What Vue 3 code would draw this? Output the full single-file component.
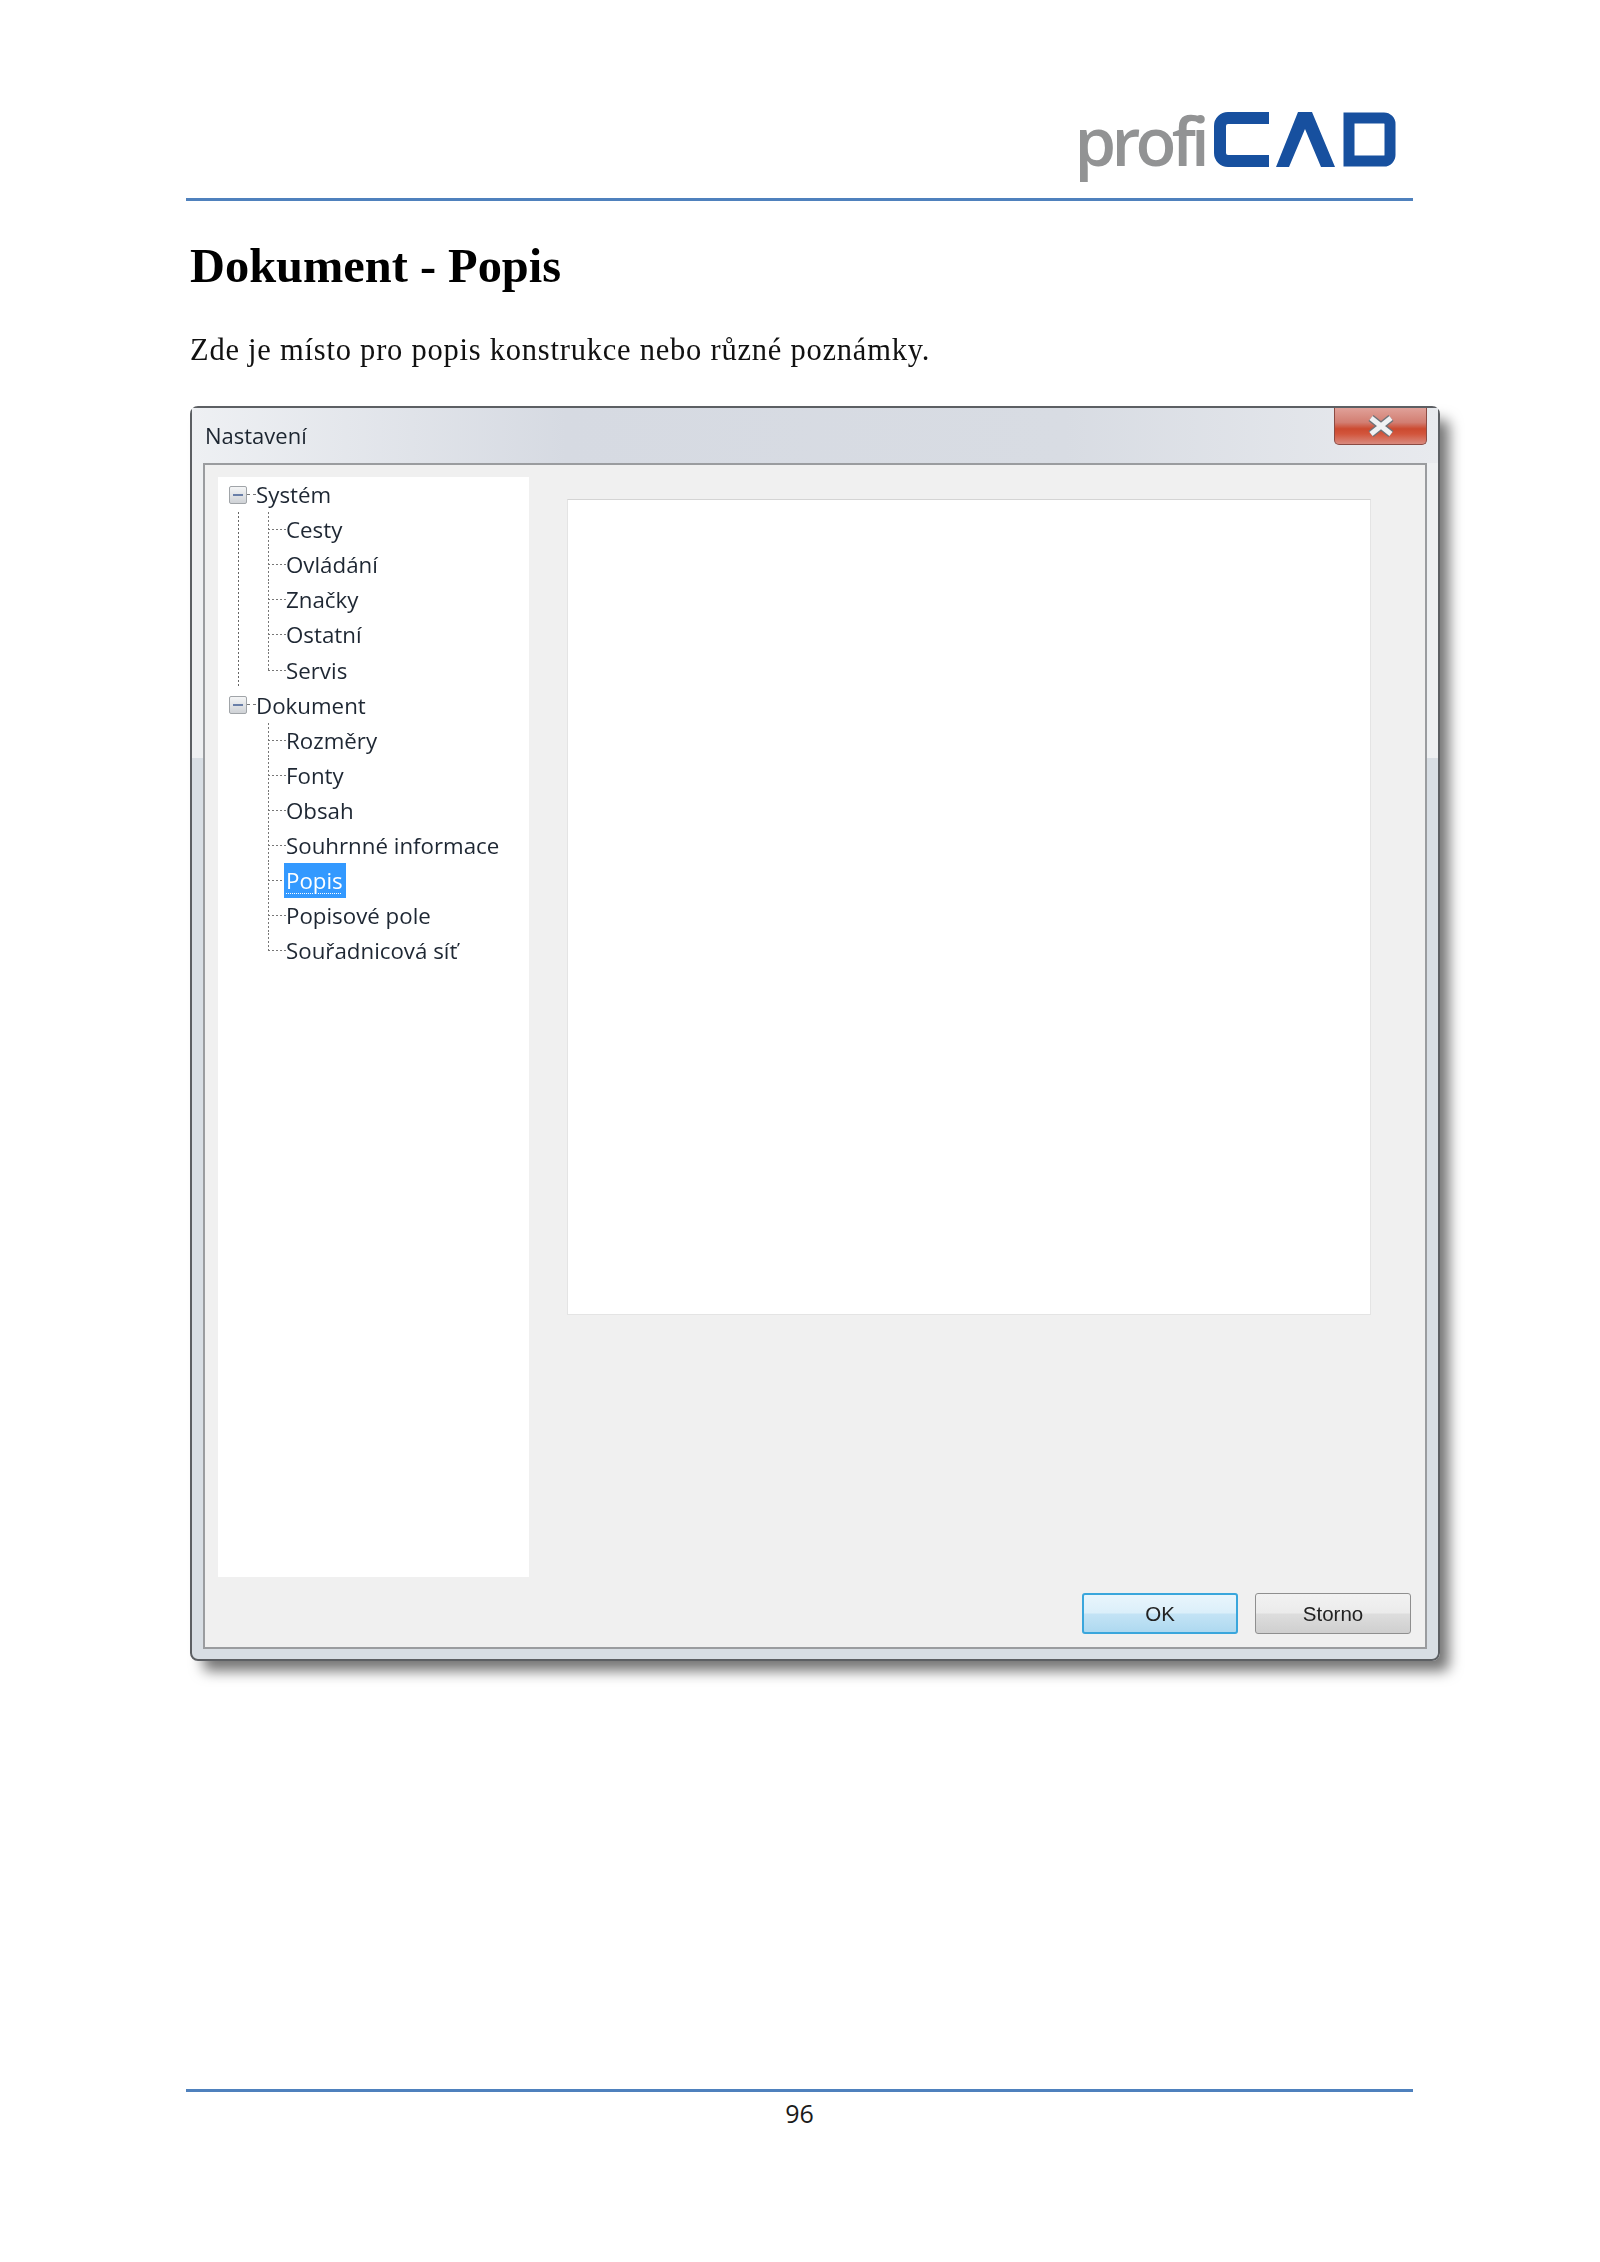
<script setup>
const groups = [
  { name: 'Systém', more: true, items: ['Cesty', 'Ovládání', 'Značky', 'Ostatní', 'Servis'] },
  { name: 'Dokument', more: false, items: ['Rozměry', 'Fonty', 'Obsah', 'Souhrnné informace', 'Popis', 'Popisové pole', 'Souřadnicová síť'] },
]
</script>

<template>
  <div class="page">
    <header class="head">
      <div class="logo" role="img" aria-label="profiCAD">
        <span class="profi">profi</span>
        <svg class="mark" width="183" height="57" viewBox="0 0 183 57">
          <path d="M55 7H14a8 8 0 0 0-8 8v27a8 8 0 0 0 8 8h41" fill="none" stroke="#17509f" stroke-width="12" />
          <path d="M62 56H75L91 18L107 56H121L98 1H84Z" fill="#17509f" />
          <path d="M135 7H170a6 6 0 0 1 6 6V44a6 6 0 0 1-6 6H135Z" fill="none" stroke="#17509f" stroke-width="11" />
        </svg>
      </div>
    </header>

    <h1 class="title">Dokument - Popis</h1>
    <p class="lead">Zde je místo pro popis konstrukce nebo různé poznámky.</p>

    <section class="window">
      <div class="titlebar">
        <span class="caption">Nastavení</span>
        <span class="close">
          <svg width="28" height="24" viewBox="0 0 28 24">
            <path d="M4 4L24 20M24 4L4 20" stroke="#6e7278" stroke-width="8" fill="none" />
            <path d="M4 4L24 20M24 4L4 20" stroke="#f0f1f3" stroke-width="5" fill="none" />
          </svg>
        </span>
      </div>
      <div class="panel">
        <nav class="tree">
          <div v-for="g in groups" :key="g.name">
            <div class="root">
              <span class="expander"><i></i></span>
              <span class="dash"></span>
              <span class="label">{{ g.name }}</span>
            </div>
            <div class="children" :class="{ more: g.more }">
              <div v-for="(item, i) in g.items" :key="item" class="child">
                <span class="stem" :class="{ last: i === g.items.length - 1 }"></span>
                <span class="label" :class="{ selected: item === 'Popis' }">{{ item }}</span>
              </div>
            </div>
          </div>
        </nav>
        <div class="content">
          <div class="memo"></div>
          <div class="actions">
            <button class="btn ok">OK</button>
            <button class="btn">Storno</button>
          </div>
        </div>
      </div>
    </section>

    <footer class="foot">96</footer>
  </div>
</template>

<style scoped>
.page {
  width: 1600px;
  height: 2262px;
  background: #fff;
  display: flex;
  flex-direction: column;
  overflow: hidden;
}
.head {
  margin: 0 187px 0 186px;
  height: 201px;
  border-bottom: 3px solid #4f81bd;
  box-sizing: border-box;
  display: flex;
  justify-content: flex-end;
  padding: 106px 16px 0 0;
}
.logo {
  display: flex;
  align-items: flex-start;
  filter: blur(0.7px);
}
.profi {
  font-family: "Open Sans", sans-serif;
  font-weight: 600;
  font-size: 67px;
  line-height: 68px;
  letter-spacing: -4.8px;
  color: #929394;
  margin-right: 9px;
}
.mark { margin-top: 5px; }
.title {
  font-family: "Liberation Serif", serif;
  font-weight: 700;
  font-size: 48.4px;
  line-height: 56px;
  color: #000;
  margin: 37px 0 0 190px;
  filter: blur(0.3px);
}
.lead {
  font-family: "Liberation Serif", serif;
  font-size: 30.5px;
  line-height: 40px;
  letter-spacing: 0.77px;
  color: #111;
  margin: 36px 0 0 190px;
  filter: blur(0.3px);
}
.window {
  width: 1250px;
  height: 1255px;
  margin: 36px 0 0 190px;
  box-sizing: border-box;
  border: 2px solid #5c5f63;
  border-radius: 8px;
  background: linear-gradient(180deg, #eef0f2 0 28%, #d8dee4 28% 100%);
  box-shadow: 11px 12px 14px -2px rgba(0, 0, 0, 0.55);
  display: flex;
  flex-direction: column;
}
.titlebar {
  height: 55px;
  display: flex;
  justify-content: space-between;
  align-items: flex-start;
  padding: 0 11px 0 13px;
  background: linear-gradient(90deg, #eef0f3, #d6dae2 30%, #d8dce3 70%, #e8eaee);
}
.caption {
  font-family: "Open Sans", sans-serif;
  font-size: 22px;
  line-height: 55px;
  color: #1c2530;
  filter: blur(0.5px);
}
.close {
  width: 93px;
  height: 37px;
  box-sizing: border-box;
  border: 1px solid #8b4b43;
  border-top: 0;
  border-radius: 0 0 5px 5px;
  background: linear-gradient(180deg, #e0a199 0, #d27e72 40%, #cc4a30 58%, #d2553c 72%, #d98a7e 100%);
  display: flex;
  align-items: center;
  justify-content: center;
}
.panel {
  flex: 1;
  margin: 0 11px 10px;
  box-sizing: border-box;
  border: 2px solid #9a9c9f;
  background: #f0f0f0;
  display: flex;
  padding: 12px 14px 13px 13px;
}
.tree {
  width: 311px;
  height: 1100px;
  background: #fff;
  font-family: "Open Sans", sans-serif;
  font-size: 22.3px;
  color: #1e2733;
}
.root, .child {
  height: 35.1px;
  display: flex;
  align-items: center;
}
.label {
  line-height: 35px;
  filter: blur(0.45px);
  white-space: nowrap;
}
.root { padding-left: 11px; }
.expander {
  width: 18px;
  height: 18px;
  box-sizing: border-box;
  border: 1px solid #a0a4a8;
  border-radius: 2px;
  background: linear-gradient(180deg, #f4f5f6, #cfd2d6);
  display: flex;
  align-items: center;
  justify-content: center;
}
.expander i {
  width: 10px;
  height: 2px;
  background: #6a7fa8;
}
.dash {
  width: 9px;
  height: 1px;
  border-top: 1px dashed #777;
}
.children {
  margin-left: 20px;
  padding-left: 30px;
}
.children.more {
  background: repeating-linear-gradient(180deg, #666 0 2px, transparent 2px 4px) left top / 1px 100% no-repeat;
}
.stem {
  width: 18px;
  align-self: stretch;
  background:
    repeating-linear-gradient(180deg, #777 0 2px, transparent 2px 4px) left top / 1px 100% no-repeat,
    repeating-linear-gradient(90deg, #777 0 2px, transparent 2px 4px) left center / 100% 1px no-repeat;
}
.stem.last {
  background:
    repeating-linear-gradient(180deg, #777 0 2px, transparent 2px 4px) left top / 1px 50% no-repeat,
    repeating-linear-gradient(90deg, #777 0 2px, transparent 2px 4px) left center / 100% 1px no-repeat;
}
.selected {
  background: #3399ff;
  color: #fff;
  padding: 0 3px 0 2px;
  margin-left: -2px;
  text-decoration: underline dotted 1px;
  text-underline-offset: 4px;
}
.content {
  flex: 1;
  display: flex;
  flex-direction: column;
  padding: 22px 0 0 38px;
}
.memo {
  width: 804px;
  height: 816px;
  background: #fff;
  border: 1px solid #e4e4e4;
  border-top-color: #d4d4d4;
  box-sizing: border-box;
}
.actions {
  margin-top: auto;
  display: flex;
  justify-content: flex-end;
  gap: 17px;
}
.btn {
  width: 156px;
  height: 41px;
  box-sizing: border-box;
  border: 1px solid #8f8f8f;
  border-radius: 3px;
  background: linear-gradient(180deg, #f2f2f2 0, #ebebeb 48%, #dddddd 52%, #cfcfcf 100%);
  font-family: "Liberation Sans", sans-serif;
  font-size: 20.5px;
  color: #222;
  filter: blur(0.4px);
  padding: 0;
}
.ok {
  border: 2px solid #3aa6dc;
  background: linear-gradient(180deg, #e9f5fc 0, #dbeffa 48%, #c3e3f5 52%, #aed9f0 100%);
}
.foot {
  margin-top: auto;
  margin-left: 186px;
  width: 1227px;
  height: 173px;
  box-sizing: border-box;
  border-top: 3px solid #4f81bd;
  text-align: center;
  font-family: "Open Sans", sans-serif;
  font-size: 25px;
  line-height: 42px;
  color: #1a1a1a;
}
</style>
